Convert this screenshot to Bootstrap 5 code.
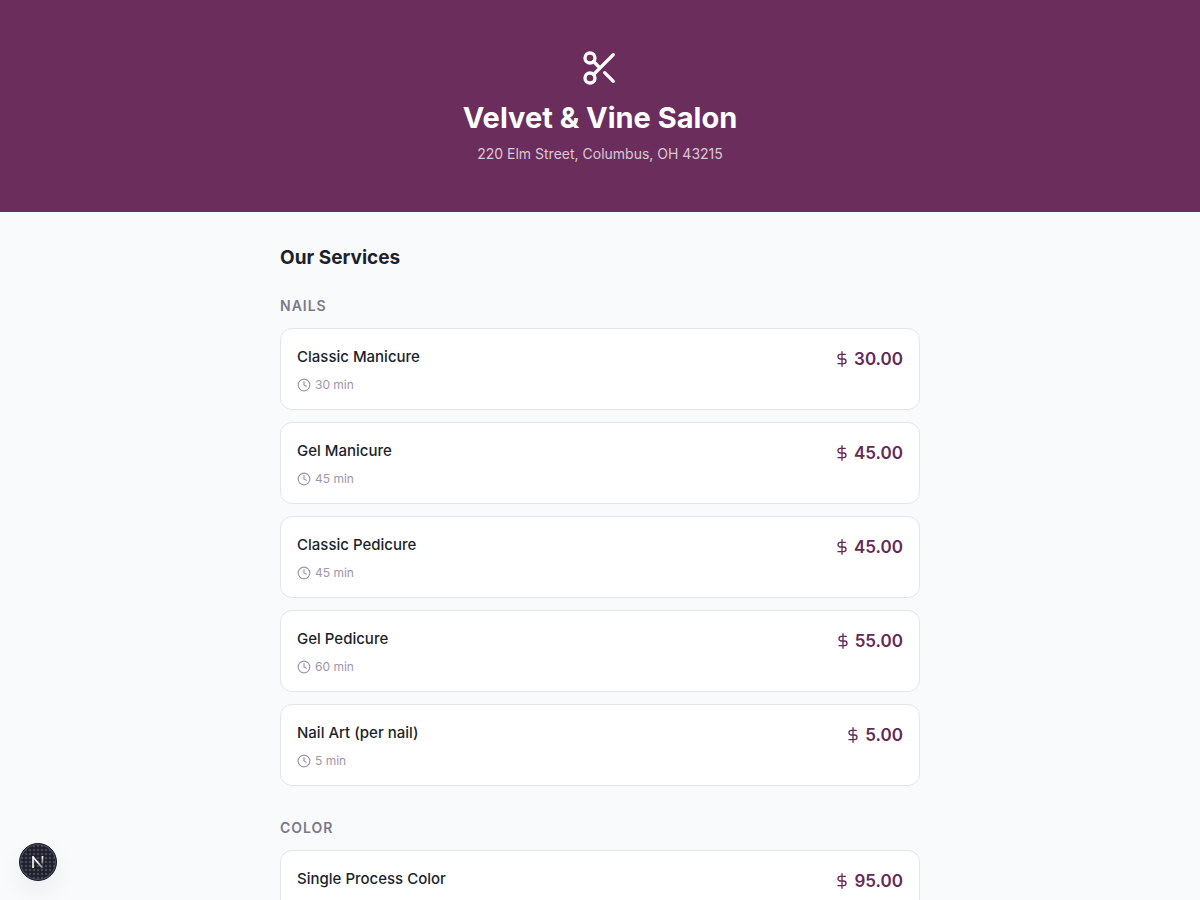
<!DOCTYPE html>
<html lang="en">
<head>
<meta charset="utf-8">
<meta name="viewport" content="width=device-width, initial-scale=1">
<title>Velvet &amp; Vine Salon</title>
<link href="https://cdn.jsdelivr.net/npm/bootstrap@5.3.0/dist/css/bootstrap.min.css" rel="stylesheet">
<script src="https://cdn.jsdelivr.net/npm/bootstrap@5.3.0/dist/js/bootstrap.bundle.min.js" defer></script>
<style>
  body { font-family: Inter, "Liberation Sans", sans-serif; background: #f9fafc; color: #1c1f2c; }
  svg { fill: none; stroke: currentColor; stroke-width: 2; stroke-linecap: round; stroke-linejoin: round; flex-shrink: 0; }
  .salon-header { background: #6b2d5c; }
  .salon-title { font-size: 29px; line-height: 36px; }
  .salon-address { font-size: 14px; line-height: 20px; color: #dac9d5; }
  .menu { max-width: 672px; padding: 32px 16px 0; }
  .menu-title { font-size: 19px; line-height: 28px; }
  .group-title { font-size: 14px; line-height: 20px; letter-spacing: 1px; color: #7c788a; }
  .stack { gap: 12px; }
  .service { border-color: #e5e5ea; border-radius: 12px; }
  .service-name { font-size: 15px; line-height: 24px; }
  .duration { font-size: 12px; line-height: 16px; color: #a294a8; }
  .price { font-size: 17px; line-height: 28px; color: #642a57; }
  .dev-button { position: fixed; left: 19px; bottom: 19px; width: 38px; height: 38px; background: #20232f radial-gradient(circle, #474a57 0 1px, transparent 1px) 0 0 / 4px 4px; border: 1px solid #191c27; box-shadow: inset 0 0 0 1px #4b4e5b, 0 10px 24px rgba(0,0,0,.06); }
</style>
</head>
<body>
<svg width="0" height="0" class="position-absolute" aria-hidden="true">
  <symbol id="clock" viewBox="0 0 24 24"><circle cx="12" cy="12" r="10"/><path d="M12 6v6l4 2"/></symbol>
  <symbol id="dollar" viewBox="0 0 24 24"><path d="M12 1v22M17 5H9.5a3.5 3.5 0 0 0 0 7h5a3.5 3.5 0 0 1 0 7H6"/></symbol>
</svg>

<header class="salon-header text-white text-center py-5 px-3">
  <svg class="d-block mx-auto mb-2" width="40" height="40" viewBox="0 0 24 24" aria-hidden="true"><circle cx="6" cy="6" r="3"/><path d="M8.12 8.12 12 12M20 4 8.12 15.88"/><circle cx="6" cy="18" r="3"/><path d="M14.8 14.8 20 20"/></svg>
  <h1 class="salon-title fw-bold pt-1 mb-2">Velvet &amp; Vine Salon</h1>
  <p class="salon-address mb-0">220 Elm Street, Columbus, OH 43215</p>
</header>

<main class="menu container-fluid mx-auto">
  <h2 class="menu-title fw-bold mb-4">Our Services</h2>

  <section class="d-flex flex-column stack mb-4 pb-2">
    <h3 class="group-title fw-semibold text-uppercase mb-0">Nails</h3>
    <article class="card service">
      <div class="card-body p-3 d-flex justify-content-between align-items-start">
        <div><h4 class="service-name fw-medium mb-2">Classic Manicure</h4><div class="duration d-flex align-items-center gap-1"><svg width="14" height="14"><use href="#clock"/></svg>30 min</div></div>
        <div class="price fw-semibold d-flex align-items-center gap-1"><svg width="16" height="16"><use href="#dollar"/></svg>30.00</div>
      </div>
    </article>
    <article class="card service">
      <div class="card-body p-3 d-flex justify-content-between align-items-start">
        <div><h4 class="service-name fw-medium mb-2">Gel Manicure</h4><div class="duration d-flex align-items-center gap-1"><svg width="14" height="14"><use href="#clock"/></svg>45 min</div></div>
        <div class="price fw-semibold d-flex align-items-center gap-1"><svg width="16" height="16"><use href="#dollar"/></svg>45.00</div>
      </div>
    </article>
    <article class="card service">
      <div class="card-body p-3 d-flex justify-content-between align-items-start">
        <div><h4 class="service-name fw-medium mb-2">Classic Pedicure</h4><div class="duration d-flex align-items-center gap-1"><svg width="14" height="14"><use href="#clock"/></svg>45 min</div></div>
        <div class="price fw-semibold d-flex align-items-center gap-1"><svg width="16" height="16"><use href="#dollar"/></svg>45.00</div>
      </div>
    </article>
    <article class="card service">
      <div class="card-body p-3 d-flex justify-content-between align-items-start">
        <div><h4 class="service-name fw-medium mb-2">Gel Pedicure</h4><div class="duration d-flex align-items-center gap-1"><svg width="14" height="14"><use href="#clock"/></svg>60 min</div></div>
        <div class="price fw-semibold d-flex align-items-center gap-1"><svg width="16" height="16"><use href="#dollar"/></svg>55.00</div>
      </div>
    </article>
    <article class="card service">
      <div class="card-body p-3 d-flex justify-content-between align-items-start">
        <div><h4 class="service-name fw-medium mb-2">Nail Art (per nail)</h4><div class="duration d-flex align-items-center gap-1"><svg width="14" height="14"><use href="#clock"/></svg>5 min</div></div>
        <div class="price fw-semibold d-flex align-items-center gap-1"><svg width="16" height="16"><use href="#dollar"/></svg>5.00</div>
      </div>
    </article>
  </section>

  <section class="d-flex flex-column stack">
    <h3 class="group-title fw-semibold text-uppercase mb-0">Color</h3>
    <article class="card service">
      <div class="card-body p-3 d-flex justify-content-between align-items-start">
        <h4 class="service-name fw-medium mb-0">Single Process Color</h4>
        <div class="price fw-semibold d-flex align-items-center gap-1"><svg width="16" height="16"><use href="#dollar"/></svg>95.00</div>
      </div>
    </article>
  </section>
</main>

<button type="button" class="dev-button rounded-circle p-0 d-flex align-items-center justify-content-center text-white" aria-label="Open developer tools">
  <svg width="14" height="14" viewBox="0 0 14 14" aria-hidden="true">
    <defs><linearGradient id="fade" gradientUnits="userSpaceOnUse" x1="0" y1="2" x2="0" y2="10"><stop offset="0" stop-color="#fff"/><stop offset="1" stop-color="#fff" stop-opacity=".1"/></linearGradient>
    <linearGradient id="tail" gradientUnits="userSpaceOnUse" x1="7" y1="7" x2="12" y2="13"><stop offset="0" stop-color="#fff"/><stop offset="1" stop-color="#fff" stop-opacity=".3"/></linearGradient></defs>
    <path d="M2 13V1" stroke-width="1.6" stroke-linecap="butt"/><path d="M2 2 11.5 13" stroke="url(#tail)" stroke-width="1.8" stroke-linecap="butt"/><path d="M11.5 1 11.4 9.5" stroke="url(#fade)" stroke-width="1.6" stroke-linecap="butt"/>
  </svg>
</button>
</body>
</html>
